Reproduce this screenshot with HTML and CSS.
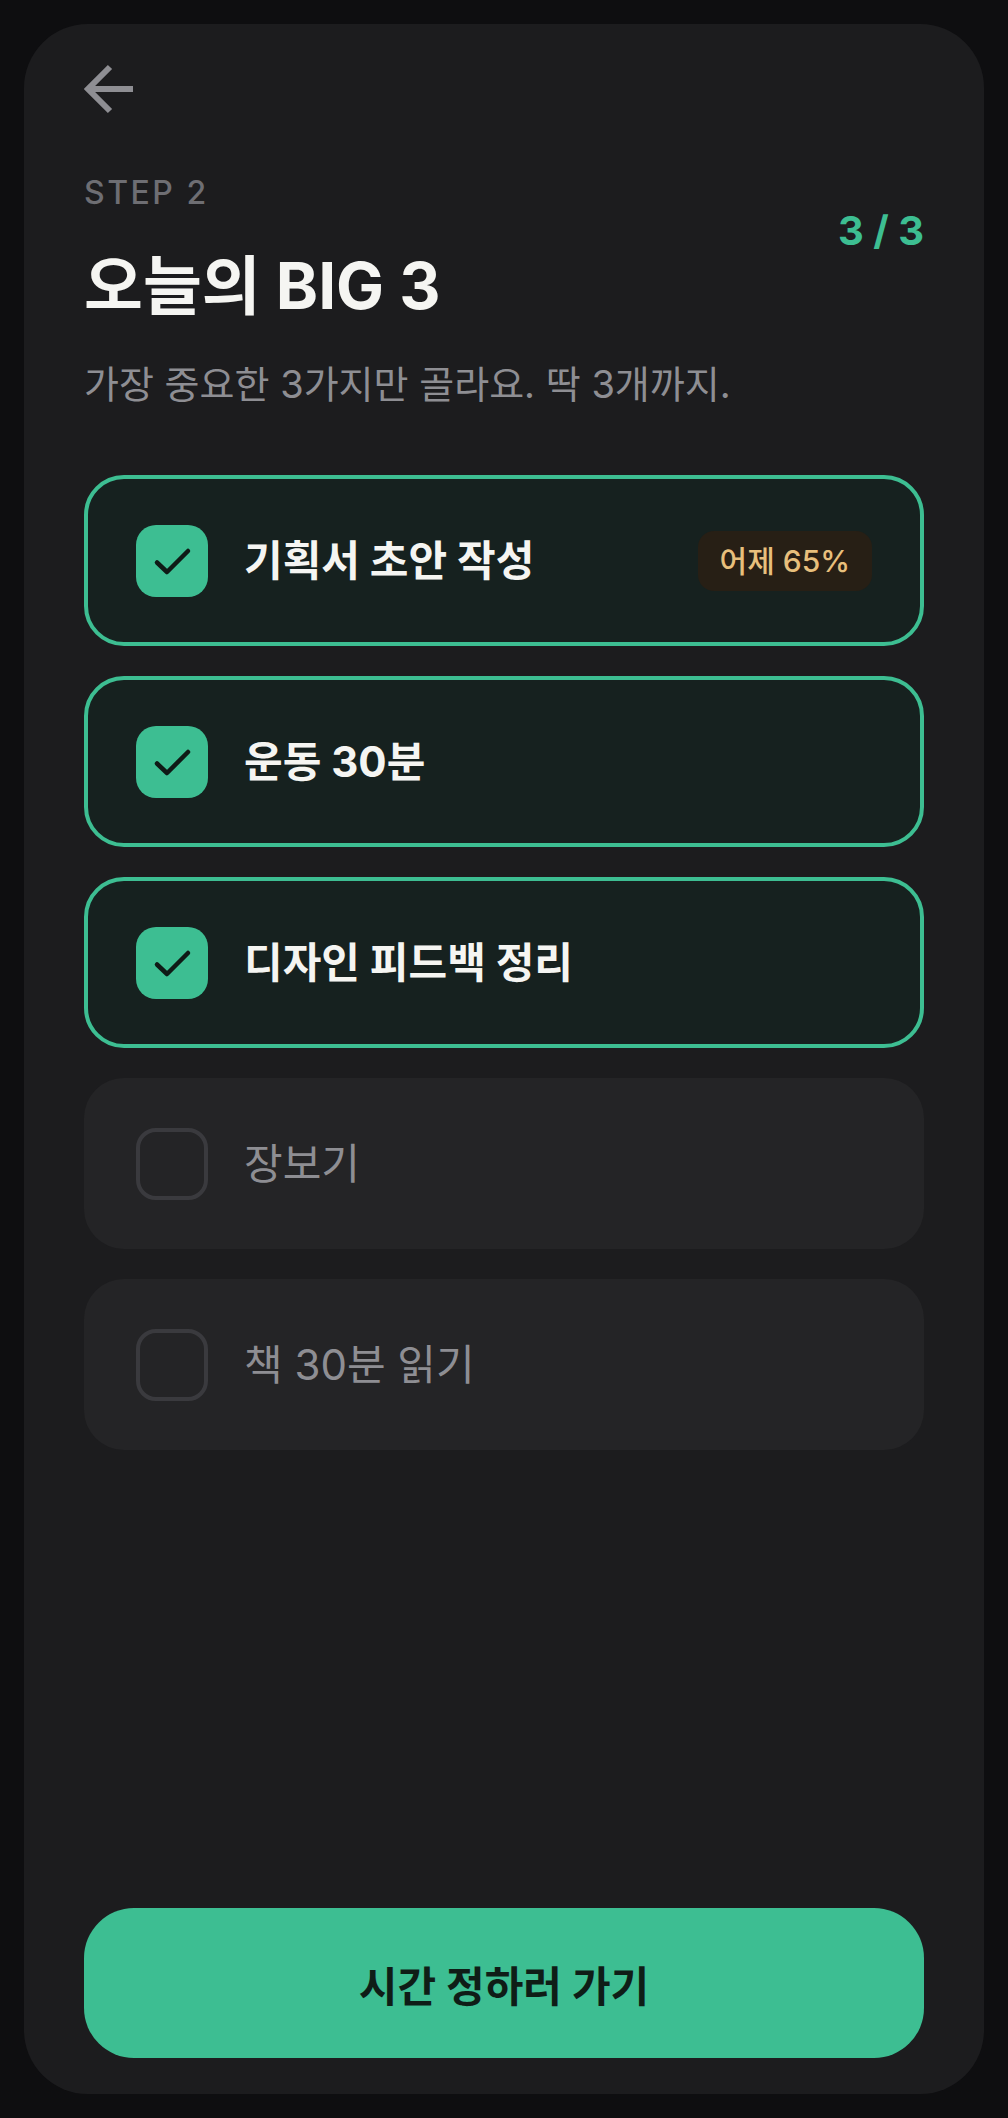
FILE: index.html
```html
<!DOCTYPE html>
<html lang="ko">
<head>
<meta charset="utf-8">
<title>오늘의 BIG 3</title>
<link rel="stylesheet" href="styles.css">
</head>
<body>
<main class="screen">
  <button class="back" aria-label="뒤로">
    <svg width="56" height="56" viewBox="0 0 56 56" fill="none">
      <path d="M53 28 H9 M30 6 L8 28 L30 50" stroke="#8e8e93" stroke-width="6" stroke-linejoin="miter" stroke-linecap="butt"/>
    </svg>
  </button>

  <header class="head">
    <div class="head-text">
      <div class="step">STEP 2</div>
      <h1 class="title">오늘의 BIG 3</h1>
    </div>
    <div class="counter">3 / 3</div>
  </header>

  <p class="desc">가장 중요한 3가지만 골라요. 딱 3개까지.</p>

  <ul class="list">
    <li class="item item-on">
      <span class="box box-on">
        <svg width="72" height="72" viewBox="0 0 72 72" fill="none"><polyline points="21,37.5 31,47 52,26" stroke="#0f1a16" stroke-width="4.5" stroke-linecap="round" stroke-linejoin="round"/></svg>
      </span>
      <span class="label">기획서 초안 작성</span>
      <span class="badge">어제 65%</span>
    </li>
    <li class="item item-on">
      <span class="box box-on">
        <svg width="72" height="72" viewBox="0 0 72 72" fill="none"><polyline points="21,37.5 31,47 52,26" stroke="#0f1a16" stroke-width="4.5" stroke-linecap="round" stroke-linejoin="round"/></svg>
      </span>
      <span class="label">운동 30분</span>
    </li>
    <li class="item item-on">
      <span class="box box-on">
        <svg width="72" height="72" viewBox="0 0 72 72" fill="none"><polyline points="21,37.5 31,47 52,26" stroke="#0f1a16" stroke-width="4.5" stroke-linecap="round" stroke-linejoin="round"/></svg>
      </span>
      <span class="label">디자인 피드백 정리</span>
    </li>
    <li class="item">
      <span class="box"></span>
      <span class="label">장보기</span>
    </li>
    <li class="item">
      <span class="box"></span>
      <span class="label">책 30분 읽기</span>
    </li>
  </ul>

  <div class="spacer"></div>

  <button class="cta">시간 정하러 가기</button>
</main>
</body>
</html>
```
FILE: styles.css
```css
* { box-sizing: border-box; }

html, body {
  margin: 0;
  padding: 0;
  background: #0e0e10;
}

body {
  padding: 24px;
  font-family: "Inter", "Noto Sans CJK KR", sans-serif;
  color: #f5f5f2;
}

.screen {
  min-height: 2070px;
  background: #1c1c1e;
  border-radius: 64px;
  padding: 37px 60px 36px;
  display: flex;
  flex-direction: column;
}

.back {
  width: 56px;
  height: 56px;
  padding: 0;
  margin: 0 0 0 -4px;
  border: 0;
  background: none;
  display: block;
}
.back svg { display: block; }

.head {
  margin-top: 57px;
  display: flex;
  justify-content: space-between;
  align-items: flex-start;
}

.step {
  font-size: 32px;
  line-height: 38px;
  font-weight: 500;
  letter-spacing: 2.5px;
  color: #6e6e73;
}

.title {
  margin: 38px 0 0;
  font-size: 64px;
  line-height: 72px;
  font-weight: 700;
  letter-spacing: 0;
  color: #f5f5f2;
}

.counter {
  margin-top: 33px;
  font-size: 40px;
  line-height: 48px;
  font-weight: 700;
  color: #3dbe92;
  letter-spacing: 0;
}

.desc {
  margin: 40px 0 0;
  font-size: 38px;
  line-height: 44px;
  color: #8e8e93;
}

.list {
  list-style: none;
  margin: 69px 0 0;
  padding: 0;
  display: flex;
  flex-direction: column;
  gap: 30px;
}

.item {
  height: 171px;
  border: 4px solid transparent;
  border-radius: 40px;
  background: #242426;
  padding: 0 48px;
  display: flex;
  align-items: center;
}

.item-on {
  border-color: #3dbe92;
  background: #16211f;
}

.box {
  flex: none;
  width: 72px;
  height: 72px;
  border-radius: 20px;
  border: 4px solid #3a3a3e;
}
.box svg { display: block; }

.box-on {
  border: 0;
  background: #3dbe92;
}

.label {
  flex: 1;
  margin-left: 36px;
  font-size: 42px;
  line-height: 50px;
  font-weight: 400;
  color: #8e8e93;
}

.item-on .label {
  font-weight: 700;
  color: #f5f5f2;
}

.badge {
  flex: none;
  height: 60px;
  padding: 0 22px;
  border-radius: 16px;
  background: #271f15;
  color: #e8bf7c;
  font-size: 30px;
  font-weight: 500;
  line-height: 60px;
}

.spacer { flex: 1; }

.cta {
  display: block;
  width: 100%;
  height: 150px;
  border: 0;
  border-radius: 50px;
  background: #3dbe92;
  color: #0f1d17;
  font-family: "Inter", "Noto Sans CJK KR", sans-serif;
  font-size: 42px;
  font-weight: 700;
}
```
